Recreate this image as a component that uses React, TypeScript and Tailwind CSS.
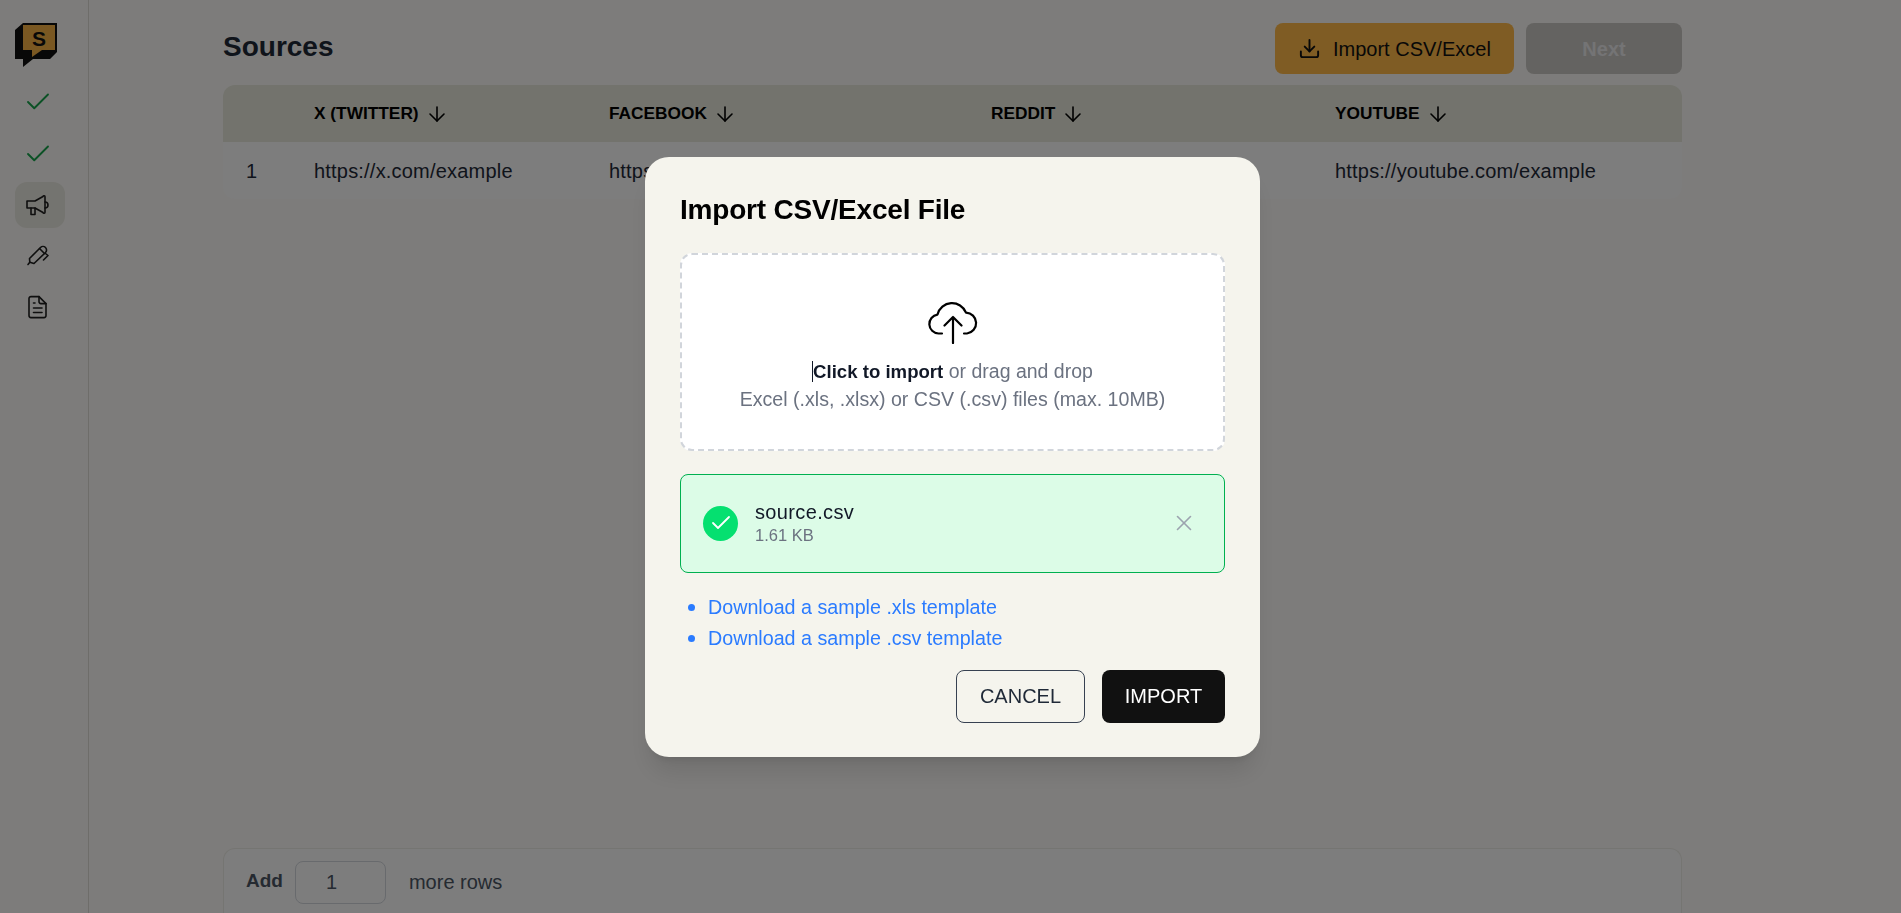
import { ArrowDown, Check, Download, X } from "lucide-react"

const columns = [
    { title: "X (TWITTER)", url: "https://x.com/example" },
    { title: "FACEBOOK", url: "https://facebook.com/example" },
    { title: "REDDIT", url: "https://reddit.com/example" },
    { title: "YOUTUBE", url: "https://youtube.com/example" },
]

const gridCols = "grid grid-cols-[91px_295px_382px_344px_1fr]"

const Logo = () => (
    <svg width="42" height="46" viewBox="0 0 42 46">
        <path d="M0 7L8 0H42V29L35 36H18L8 44V36H0Z" fill="#111" />
        <path d="M8 2H40V27H27L17 34V27H8Z" fill="#f5b045" />
        <text x="24" y="22.500" textAnchor="middle" fontSize="21" fontWeight="700" fontFamily="Liberation Sans" fill="#111">S</text>
    </svg>
)

const Megaphone = () => (
    <svg width="24" height="24" viewBox="0 0 24 24" fill="none" stroke="#1f1f1f" strokeWidth="1.6" strokeLinejoin="round" strokeLinecap="round">
        <path d="M2 8h8l8-4.500a1 1 0 0 1 2 .5V19a1 1 0 0 1-2 .5L10 15H2z" />
        <path d="M20 9a3 3 0 0 1 0 6" />
        <path d="M6 15v6.500h4V15" />
    </svg>
)

const Pen = () => (
    <svg width="24" height="24" viewBox="0 0 24 24" fill="none" stroke="#1f1f1f" strokeWidth="1.6" strokeLinejoin="round" strokeLinecap="round">
        <path d="M3 21.500l1.800-2.300" />
        <path d="M4.800 19.200 4.500 15.500 15.500 4.500a3.500 3.500 0 0 1 5 5L9 20.500z" />
        <path d="M14.500 5.500l5 5" />
        <path d="M20.500 10.500l2.500 2-4.500 4.500" />
    </svg>
)

const FileDoc = () => (
    <svg width="24" height="24" viewBox="0 0 24 24" fill="none" stroke="#1f1f1f" strokeWidth="1.6" strokeLinejoin="round" strokeLinecap="round">
        <path d="M6 1.600h8l7 7v12a2 2 0 0 1-2 2H6a2 2 0 0 1-2-2V3.600a2 2 0 0 1 2-2z" />
        <path d="M14 1.600v5a2 2 0 0 0 2 2h5" />
        <path d="M8.500 8h1.500M8.500 13h8.500M8.500 17.500h8.500" />
    </svg>
)

const CloudUp = () => (
    <svg width="50" height="44" viewBox="0 0 50 44" fill="none" stroke="#000" strokeWidth="2.2" strokeLinecap="round" strokeLinejoin="round">
        <path d="M14 33.500H10.500A9.500 9.500 0 0 1 9.500 14.600A15 15 0 0 1 38 12.600A10.500 10.500 0 0 1 39 33.500H36" />
        <path d="M25 43V17M16.500 25.500l8.500-8.500 8.500 8.500" />
    </svg>
)

export default function App() {
    return <div className="relative flex h-screen overflow-hidden bg-[#faf9f6] font-['Liberation_Sans',sans-serif]">
        <aside className="flex w-[89px] shrink-0 flex-col items-start border-r border-[#dcdbd5] pl-[15px] pt-[23px]">
            <Logo />
            <div className="mt-[7px] flex h-[52px] w-[50px] items-center pl-[8px]"><Check size={30} strokeWidth={1.5} color="#16a34a" /></div>
            <div className="flex h-[52px] w-[50px] items-center pl-[8px]"><Check size={30} strokeWidth={1.5} color="#16a34a" /></div>
            <div className="mt-[2px] flex h-[46px] w-[50px] items-center rounded-xl bg-[#e9e8e0] pl-[10px]"><Megaphone /></div>
            <div className="mt-[1px] flex h-[52px] w-[50px] items-center pl-[10px]"><Pen /></div>
            <div className="flex h-[52px] w-[50px] items-center pl-[10px]"><FileDoc /></div>
        </aside>

        <main className="flex flex-1 flex-col pl-[134px] pr-[219px]">
            <div className="flex h-[85px] shrink-0 items-start justify-between pt-[23px]">
                <h1 className="text-[28px] font-bold leading-[48px] text-[#1f2937]">Sources</h1>
                <div className="flex gap-3">
                    <button className="flex h-[51px] w-[239px] items-center gap-3 rounded-lg bg-[#feb848] px-[23px] text-[20px] text-[#111]">
                        <Download size={23} strokeWidth={2} />
                        Import CSV/Excel
                    </button>
                    <button className="h-[51px] w-[156px] rounded-lg bg-[#c8c6c2] text-[20px] font-bold text-[#e8e8ea]">Next</button>
                </div>
            </div>

            <div className="overflow-hidden rounded-xl bg-[#fafafa]">
                <div className={`${gridCols} h-[57px] items-center bg-[#e6e7da] text-[17.3px] font-bold text-black`}>
                    <div />
                    {columns.map((col) => (
                        <div key={col.title} className="flex items-center gap-[6px]">
                            {col.title}
                            <ArrowDown size={24} strokeWidth={1.6} />
                        </div>
                    ))}
                </div>
                <div className={`${gridCols} h-[57px] items-center text-[20px] tracking-[0.2px] text-[#1f2937]`}>
                    <div className="pl-[23px]">1</div>
                    {columns.map((col) => (
                        <div key={col.url}>{col.url}</div>
                    ))}
                </div>
            </div>

            <div className="mt-auto flex h-[65px] shrink-0 items-start rounded-t-xl border border-b-0 border-[#ebeae4] bg-[#fafafa] pl-[22px] pt-[12px] text-[20px] text-[#4b5563]">
                <div className="flex h-[43px] items-center">
                    <span className="mb-[2px] text-[19px] font-bold">Add</span>
                    <div className="ml-[12px] flex h-[43px] w-[91px] items-center rounded-lg border border-[#d1d5db] pb-[2px] pl-[30px]">1</div>
                    <span className="mb-[2px] ml-[23px]">more rows</span>
                </div>
            </div>
        </main>

        <div className="fixed inset-0 flex items-center justify-center bg-black/50 pl-[4px]">
            <div className="flex h-[600px] w-[615px] flex-col rounded-3xl bg-[#f5f4ed] px-[35px] pt-[35px] shadow-xl">
                <h2 className="text-[28px] font-bold leading-[36px] tracking-[-0.2px] text-black">Import CSV/Excel File</h2>
                <div className="mt-[25px] flex h-[198px] flex-col items-center justify-center rounded-xl border-2 border-dashed border-[#d1d5db] bg-white pt-[10px]">
                    <CloudUp />
                    <p className="mt-[13px] text-[19.5px] leading-[28px] text-[#6b7280]">
                        <span className="border-l border-[#111827] text-[18.6px] font-bold text-[#111827]">Click to import</span> or drag and drop
                    </p>
                    <p className="text-[19.6px] leading-[27px] text-[#6b7280]">Excel (.xls, .xlsx) or CSV (.csv) files (max. 10MB)</p>
                </div>
                <div className="mt-[23px] flex h-[99px] items-center rounded-lg border border-[#00b050] bg-[#dcfce7] pl-[22px] pr-[27px]">
                    <div className="flex h-[35px] w-[35px] items-center justify-center rounded-full bg-[#05e070]"><Check size={24} strokeWidth={1.8} color="#fff" /></div>
                    <div className="ml-[17px] flex-1">
                        <div className="text-[20px] leading-[24px] tracking-[0.35px] text-[#111827]">source.csv</div>
                        <div className="text-[16.5px] leading-[22px] text-[#6b7280]">1.61 KB</div>
                    </div>
                    <X size={26} strokeWidth={1.5} color="#9ca3af" />
                </div>
                <ul className="mt-[19px] pl-[8px] text-[19.7px] leading-[31px] text-[#2a7bff]">
                    <li className="flex items-center gap-[13px]">
                        <span className="h-[7px] w-[7px] rounded-full bg-[#2a7bff]" />
                        Download a sample .xls template
                    </li>
                    <li className="flex items-center gap-[13px]">
                        <span className="h-[7px] w-[7px] rounded-full bg-[#2a7bff]" />
                        Download a sample .csv template
                    </li>
                </ul>
                <div className="mt-[16px] flex justify-end gap-[17px]">
                    <button className="h-[53px] w-[129px] rounded-lg border border-[#374151] text-[20px] text-[#1f2937]">CANCEL</button>
                    <button className="h-[53px] w-[123px] rounded-lg bg-[#111] text-[20px] text-white">IMPORT</button>
                </div>
            </div>
        </div>
    </div>
}
